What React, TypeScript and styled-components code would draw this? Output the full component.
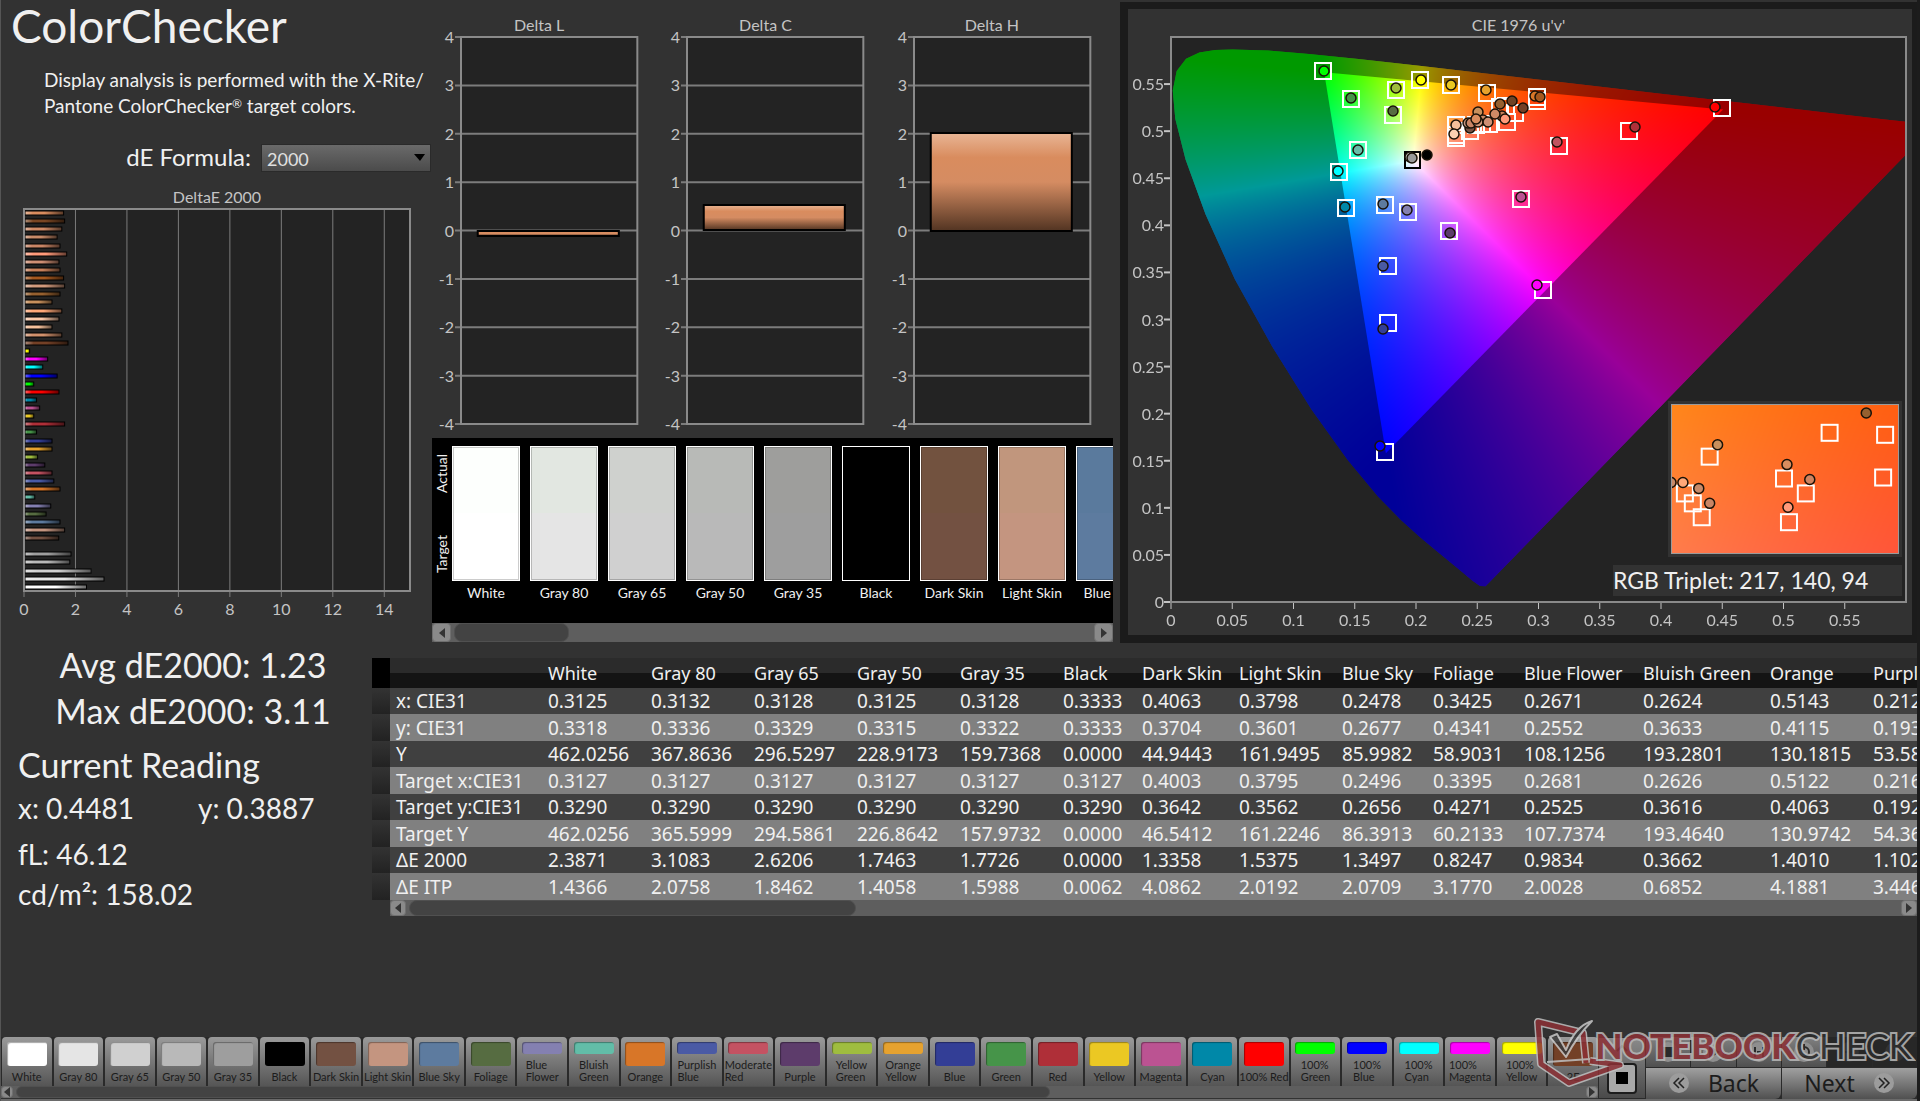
import React, { useEffect, useRef } from "react";
import styled, { createGlobalStyle } from "styled-components";

const Global = createGlobalStyle`
  * { box-sizing: border-box; }
  body { margin: 0; background: #323232; color: #f0f0f0; font-family: Lato, "Open Sans", sans-serif; }
  button, select { font-family: inherit; margin: 0; }
  h1, h2, p { margin: 0; font-weight: 400; }
`;

/* ---------- data ---------- */

type Patch = { name: string; color: string; actual?: string; lines?: string[] };

const patches: Patch[] = [
  { name: "White", color: "#ffffff", actual: "#fdfffd" },
  { name: "Gray 80", color: "#e5e5e5", actual: "#e2e7e1" },
  { name: "Gray 65", color: "#d0d0d0", actual: "#cfd1ce" },
  { name: "Gray 50", color: "#b9b9b9", actual: "#b8bab7" },
  { name: "Gray 35", color: "#9e9e9e", actual: "#9e9e9c" },
  { name: "Black", color: "#000000" },
  { name: "Dark Skin", color: "#735142", actual: "#72523f" },
  { name: "Light Skin", color: "#c49580", actual: "#c1967d" },
  { name: "Blue Sky", color: "#5d7b9f", actual: "#5a7a9d" },
  { name: "Foliage", color: "#566c41" },
  { name: "Blue Flower", color: "#8480b1", lines: ["Blue", "Flower"] },
  { name: "Bluish Green", color: "#62bda8", lines: ["Bluish", "Green"] },
  { name: "Orange", color: "#d87628" },
  { name: "Purplish Blue", color: "#4a5aa5", lines: ["Purplish", "Blue"] },
  { name: "Moderate Red", color: "#c45262", lines: ["Moderate", "Red"] },
  { name: "Purple", color: "#5d3c6b" },
  { name: "Yellow Green", color: "#9fbd3f", lines: ["Yellow", "Green"] },
  { name: "Orange Yellow", color: "#e6a22f", lines: ["Orange", "Yellow"] },
  { name: "Blue", color: "#333e96" },
  { name: "Green", color: "#469449" },
  { name: "Red", color: "#af2f38" },
  { name: "Yellow", color: "#ebc823" },
  { name: "Magenta", color: "#bb5392" },
  { name: "Cyan", color: "#0088a8" },
  { name: "100% Red", color: "#ff0000" },
  { name: "100% Green", color: "#00ff00", lines: ["100%", "Green"] },
  { name: "100% Blue", color: "#0000ff", lines: ["100%", "Blue"] },
  { name: "100% Cyan", color: "#00ffff", lines: ["100%", "Cyan"] },
  { name: "100% Magenta", color: "#ff00ff", lines: ["100%", "Magenta"] },
  { name: "100% Yellow", color: "#ffff00", lines: ["100%", "Yellow"] },
  { name: "2E", color: "#734026" },
];

const skinBars: [string, number][] = [
  ["#d98c5e", 1.5], ["#7a4623", 1.54], ["#cf8a66", 1.43], ["#c88a68", 1.25], ["#c98565", 1.36],
  ["#ff9a7a", 1.62], ["#cf8f74", 1.32], ["#c8805a", 1.36], ["#a5581f", 1.5], ["#d29a7c", 1.54],
  ["#96602f", 1.36], ["#c8905c", 1.05], ["#ffa878", 1.43], ["#fbc8a8", 1.32], ["#f5c09a", 1.05],
  ["#d2916c", 1.43], ["#734026", 1.67],
];
const patchValues = [
  2.39, 3.07, 2.57, 1.74, 1.79, 0, 1.31, 1.54, 1.36, 0.82, 1, 0.38, 1.36, 1.12, 1.05, 0.77, 0.49,
  1.05, 1.05, 0.45, 1.54, 0.34, 0.57, 0.45, 1.32, 0.34, 1.25, 0.69, 0.88, 0.18,
];
const deltaEBars: [string, number][] = [
  ...skinBars,
  ...patchValues.map((v, i) => [patches[i].color, v] as [string, number]).reverse(),
];

const columns: [string, number][] = [
  ["White", 103], ["Gray 80", 103], ["Gray 65", 103], ["Gray 50", 103], ["Gray 35", 103],
  ["Black", 79], ["Dark Skin", 97], ["Light Skin", 103], ["Blue Sky", 91], ["Foliage", 91],
  ["Blue Flower", 119], ["Bluish Green", 127], ["Orange", 103], ["Purplish Blue", 140],
];
const rows: [string, string][] = [
  ["x: CIE31", "0.3125 0.3132 0.3128 0.3125 0.3128 0.3333 0.4063 0.3798 0.2478 0.3425 0.2671 0.2624 0.5143 0.2123"],
  ["y: CIE31", "0.3318 0.3336 0.3329 0.3315 0.3322 0.3333 0.3704 0.3601 0.2677 0.4341 0.2552 0.3633 0.4115 0.1933"],
  ["Y", "462.0256 367.8636 296.5297 228.9173 159.7368 0.0000 44.9443 161.9495 85.9982 58.9031 108.1256 193.2801 130.1815 53.5820"],
  ["Target x:CIE31", "0.3127 0.3127 0.3127 0.3127 0.3127 0.3127 0.4003 0.3795 0.2496 0.3395 0.2681 0.2626 0.5122 0.2164"],
  ["Target y:CIE31", "0.3290 0.3290 0.3290 0.3290 0.3290 0.3290 0.3642 0.3562 0.2656 0.4271 0.2525 0.3616 0.4063 0.1923"],
  ["Target Y", "462.0256 365.5999 294.5861 226.8642 157.9732 0.0000 46.5412 161.2246 86.3913 60.2133 107.7374 193.4640 130.9742 54.3620"],
  ["ΔE 2000", "2.3871 3.1083 2.6206 1.7463 1.7726 0.0000 1.3358 1.5375 1.3497 0.8247 0.9834 0.3662 1.4010 1.1023"],
  ["ΔE ITP", "1.4366 2.0758 1.8462 1.4058 1.5988 0.0062 4.0862 2.0192 2.0709 3.1770 2.0028 0.6852 4.1881 3.4462"],
];

/* spectral locus in CIE 1931 xy */
const locus: number[][] = [
  [0.1741, 0.005], [0.1714, 0.0051], [0.1689, 0.0069], [0.1644, 0.0109], [0.1566, 0.0177],
  [0.151, 0.0227], [0.144, 0.0297], [0.1355, 0.0399], [0.1241, 0.0578], [0.1096, 0.0868],
  [0.0913, 0.1327], [0.0687, 0.2007], [0.0454, 0.295], [0.0235, 0.4127], [0.0082, 0.5384],
  [0.0039, 0.6548], [0.0139, 0.7502], [0.0389, 0.812], [0.0743, 0.8338], [0.1142, 0.8262],
  [0.1547, 0.8059], [0.2296, 0.7543], [0.3016, 0.6923], [0.3731, 0.6245], [0.4441, 0.5547],
  [0.5125, 0.4866], [0.5752, 0.4242], [0.627, 0.3725], [0.6658, 0.334], [0.6915, 0.3083],
  [0.719, 0.2809], [0.7347, 0.2653],
];
const gamut = [[0.4507, 0.5229], [0.125, 0.5625], [0.1754, 0.1579]];

/* marker positions on a 735 x 565 plot */
const targets: number[][] = [
  [152, 34], [249, 43], [280, 48], [225, 53], [180, 62], [222, 78], [316, 56], [366, 60], [366, 64],
  [551, 71], [458, 94], [388, 109], [187, 113], [168, 135], [175, 171], [214, 168], [237, 175],
  [350, 162], [278, 194], [217, 229], [217, 286], [372, 253], [214, 415], [285, 88], [285, 101],
  [285, 98], [299, 94], [305, 88], [311, 87], [318, 87], [329, 70], [336, 85], [344, 76], [335, 69],
];
const readings: [number, number, string][] = [
  [153, 34, "#00ff00"], [250, 43, "#ffff00"], [280, 48, "#e9c820"], [225, 51, "#9fbd3c"],
  [180, 61, "#469449"], [222, 74, "#566c41"], [315, 53, "#e6a22c"], [364, 59, "#d87628"],
  [369, 60, "#a5581f"], [544, 70, "#ff0000"], [464, 90, "#af3039"], [386, 105, "#c15460"],
  [187, 113, "#66bda8"], [167, 134, "#00ffff"], [174, 170, "#0088a8"], [212, 167, "#5d7b9e"],
  [236, 173, "#8480b1"], [350, 160, "#bb5392"], [279, 196, "#5b3b69"], [212, 229, "#4a5aa3"],
  [212, 292, "#333e96"], [366, 248, "#ff00ff"], [209, 409, "#0000ff"], [239, 120, "#e0e0e0"],
  [241, 121, "#999999"], [256, 118, "#000000"], [285, 88, "#f5c09a"], [283, 97, "#fbd0b0"],
  [299, 91, "#735142"], [297, 86, "#c49580"], [300, 86, "#c98565"], [307, 75, "#c8905c"],
  [312, 83, "#c88a68"], [307, 85, "#d29a7c"], [305, 82, "#d98c5e"], [317, 85, "#cf8f74"],
  [331, 79, "#c8805a"], [324, 77, "#cf8a66"], [334, 82, "#ff9a7a"], [329, 67, "#96602f"],
  [341, 64, "#6f4325"], [352, 71, "#734026"],
];
const zoomTargets: number[][] = [
  [159, 28], [215, 30], [38, 52], [113, 74], [135, 89], [213, 73], [13, 89], [21, 99], [30, 113], [118, 118],
];
const zoomReadings: [number, number, string][] = [
  [196, 8, "#96602f"], [46, 40, "#c8905c"], [116, 60, "#d98c5e"], [139, 75, "#cf8360"],
  [117, 103, "#ff9a7a"], [11, 78, "#ffa878"], [27, 84, "#c88a68"], [38, 99, "#c98565"], [-1, 78, "#c88a68"],
];

/* ---------- layout ---------- */

const Page = styled.div`
  min-height: 100vh;
  display: flex;
  flex-direction: column;
  border-left: 1px solid #555;
  border-right: 3px solid #1c1c1c;
  overflow: hidden;
`;
const Top = styled.div`
  display: grid;
  grid-template-columns: 431px 688px minmax(0, 1fr);
`;
const Left = styled.section`
  display: flex;
  flex-direction: column;
`;
const Title = styled.h1`
  font-size: 46px;
  line-height: 52px;
  padding-left: 10px;
`;
const Intro = styled.p`
  margin: 15px 0 0 43px;
  font-size: 19px;
  line-height: 26px;
  white-space: nowrap;
  small { font-size: 12px; line-height: 12px; vertical-align: 5px; }
`;
const Formula = styled.div`
  display: flex;
  justify-content: flex-end;
  align-items: center;
  gap: 10px;
  margin-top: 24px;
  padding-right: 1px;
  font-size: 24px;
  line-height: 28px;
`;
const SelectBox = styled.div`
  position: relative;
  width: 170px;
  height: 28px;
`;
const Select = styled.select`
  width: 100%;
  height: 100%;
  appearance: none;
  border: 1px solid #2a2a2a;
  border-radius: 0;
  padding: 2px 5px 0;
  background: linear-gradient(#6a6a6a, #4b4b4b);
  color: #e0e0e0;
  font-size: 18px;
`;
const Arrow = styled.svg`
  position: absolute;
  right: 6px;
  top: 11px;
  pointer-events: none;
`;
const ChartTitle = styled.h2<{ $pad?: number }>`
  font-size: 16px;
  line-height: 20px;
  text-align: center;
  color: #c4c4c4;
  padding: 0 ${(p) => p.$pad || 0}px 2px 0;
`;
const DeltaEArea = styled.div`
  padding: 16px 22px 0 23px;
`;
const Plot = styled.div<{ $h: number }>`
  position: relative;
  height: ${(p) => p.$h}px;
  background: #232323;
`;
const Layer = styled.svg`
  position: absolute;
  inset: 0;
  width: 100%;
  height: 100%;
  overflow: visible;
  text { fill: #c4c4c4; font-size: 16px; }
`;
const Clipped = styled(Layer)`
  overflow: hidden;
`;
const Middle = styled.section`
  display: flex;
  flex-direction: column;
  padding-right: 7px;
`;
const Deltas = styled.div`
  display: grid;
  grid-template-columns: repeat(3, 1fr);
  gap: 50px;
  padding: 15px 23px 14px 29px;
`;
const Strip = styled.div`
  display: flex;
  height: 185px;
  padding-top: 8px;
  background: #000;
  overflow: hidden;
`;
const SideLabels = styled.div`
  flex: none;
  width: 20px;
  height: 135px;
  display: flex;
  flex-direction: column-reverse;
  justify-content: space-between;
  align-items: center;
  padding: 8px 0;
  font-size: 14px;
  line-height: 18px;
  span { writing-mode: vertical-rl; transform: rotate(180deg); }
`;
const Swatch = styled.figure`
  flex: none;
  width: 68px;
  margin: 0 10px 0 0;
  font-size: 14px;
  line-height: 24px;
  white-space: nowrap;
  figcaption { text-align: center; }
`;
const SwatchColor = styled.div<{ $top: string; $bottom: string }>`
  height: 135px;
  border: 1px solid #fff;
  background: linear-gradient(${(p) => p.$top} 50%, ${(p) => p.$bottom} 50%);
  box-shadow: inset 0 0 0 1px rgba(0, 0, 0, 0.2);
`;

const Bar = styled.div<{ $h: number }>`
  display: grid;
  grid-template-columns: ${(p) => p.$h}px minmax(0, 1fr) ${(p) => p.$h}px;
  gap: 3px;
  height: ${(p) => p.$h}px;
  background: #5e5e5e;
`;
const BarButton = styled.button`
  display: grid;
  place-items: center;
  padding: 0;
  border: 1px solid #707070;
  border-radius: 4px;
  background: #8a8a8a;
`;
const Thumb = styled.div<{ $size: number }>`
  width: ${(p) => p.$size}%;
  height: 100%;
  border: 1px solid #505050;
  border-radius: 8px;
  background: #434343;
`;

const CiePanel = styled.section`
  height: 641px;
  margin-top: 2px;
  border: solid #1b1b1b;
  border-width: 7px 5px 8px 8px;
  padding: 6px 6px 0 43px;
`;
const Field = styled.canvas`
  display: block;
  width: 100%;
  height: 100%;
`;
const Inset = styled.div`
  position: absolute;
  right: 4px;
  top: 364px;
  width: 234px;
  height: 156px;
  padding: 3px;
  background: #323232;
`;
const InsetPlot = styled.div`
  position: relative;
  height: 150px;
  border: 1px solid #9a9a9a;
`;
const Triplet = styled.p`
  position: absolute;
  right: 4px;
  bottom: 6px;
  width: 289px;
  background: #323232;
  font-size: 23px;
  line-height: 31px;
  white-space: nowrap;
`;

const Lower = styled.div`
  display: grid;
  grid-template-columns: 371px minmax(0, 1fr);
  margin-top: 15px;
`;
const Stats = styled.section`
  padding: 0 16px 0 17px;
  font-size: 28px;
  line-height: 40px;
`;
const Scores = styled.div`
  padding-left: 12px;
  margin: -16px 0 8px;
  font-size: 34px;
  line-height: 46px;
  text-align: center;
`;
const Heading = styled.h2`
  font-size: 34px;
  line-height: 46px;
`;
const Pair = styled.div`
  display: grid;
  grid-template-columns: 180px 1fr;
  margin-bottom: 6px;
  white-space: nowrap;
`;
const TableBox = styled.div`
  overflow: hidden;
`;
const Table = styled.table`
  width: max-content;
  table-layout: fixed;
  border-collapse: collapse;
  font-family: "Noto Sans", sans-serif;
  font-size: 19px;
  line-height: 24px;
  white-space: nowrap;
  th, td { font-weight: 400; text-align: left; padding: 0 0 0 6px; }
  thead th {
    height: 30px;
    font-size: 18px;
    background: linear-gradient(#2b2b2b 50%, #141414 50%);
  }
  thead th:first-child { background: #000; }
  tbody tr { height: 26px; background: #404040; }
  tbody tr:nth-child(even) { height: 27px; background: #808080; }
  tbody td:first-child { background: linear-gradient(#333, #222); }
`;
const TableScroll = styled.div`
  padding-left: 18px;
`;

const Footer = styled.footer`
  display: grid;
  grid-template-columns: minmax(0, 1fr) 48px 271px;
  height: 64px;
  margin-top: auto;
  border-bottom: 2px solid #6a6a6a;
  position: relative;
`;
const Tabs = styled.nav`
  display: grid;
  grid-template-columns: repeat(31, minmax(0, 1fr));
  gap: 2px;
  height: 49px;
  padding-left: 1px;
  background: #2a2a2a;
`;
const Tab = styled.button`
  display: flex;
  flex-direction: column;
  align-items: center;
  justify-content: space-between;
  padding: 5px 0 3px;
  border: 0;
  border-radius: 4px 4px 0 0;
  background: linear-gradient(#9a9a9a, #555);
  color: #1c1c1c;
  font-size: 11px;
  line-height: 12px;
  text-align: left;
  white-space: nowrap;
  overflow: hidden;
`;
const Chip = styled.span<{ $color: string; $short: boolean }>`
  width: 40px;
  height: ${(p) => (p.$short ? 12 : 24)}px;
  border-radius: 3px;
  background: ${(p) => p.$color};
  box-shadow: inset 1px 1px 1px rgba(0, 0, 0, 0.35);
`;
const Stop = styled.div`
  display: grid;
  grid-template-rows: 20px 1fr;
  place-items: center;
  background: linear-gradient(#8a8a8a, #4a4a4a);
  border: 1px solid #2a2a2a;
`;
const StopButton = styled.button`
  width: 30px;
  height: 31px;
  padding: 7px;
  border: 2px solid #1c1c1c;
  border-radius: 4px;
  background: #a8a8a8;
  span { display: block; height: 12px; background: #000; }
`;
const Controls = styled.div`
  display: grid;
  grid-template-columns: repeat(6, 1fr);
  grid-template-rows: 30px 1fr;
  gap: 1px;
  background: #2a2a2a;
`;
const Control = styled.button<{ $off?: boolean }>`
  display: grid;
  place-items: center;
  padding: 0;
  border: 0;
  background: ${(p) => (p.$off ? "#272727" : "linear-gradient(#808080, #505050)")};
`;
const Nav = styled.button`
  grid-column: span 3;
  display: flex;
  align-items: center;
  justify-content: center;
  gap: 18px;
  padding: 0 0 2px;
  border: 0;
  border-radius: 0 0 6px 0;
  background: linear-gradient(#a0a0a0, #505050);
  color: #1c1c1c;
  font-family: "Noto Sans", sans-serif;
  font-size: 23px;
  line-height: 28px;
`;
const Watermark = styled.div`
  position: absolute;
  right: 5px;
  bottom: 10px;
  display: flex;
  align-items: flex-start;
  pointer-events: none;
  opacity: 0.85;
`;
const Emblem = styled.svg`
  margin-right: -30px;
`;
const Brand = styled.div`
  padding-top: 6px;
  font-size: 35px;
  line-height: 44px;
  font-weight: 900;
  color: #8c3035;
  paint-order: stroke fill;
  -webkit-text-stroke: 4px #b8b8b8;
  span { font-weight: 400; color: #2c2c2c; }
`;

/* ---------- parts ---------- */

function Scrollbar({ height, size }: { height: number; size: number }) {
  return (
    <Bar $h={height}>
      <BarButton aria-label="Scroll left">
        <svg width="6" height="10"><path d="M6 0 0 5l6 5z" fill="#333" /></svg>
      </BarButton>
      <Thumb $size={size} />
      <BarButton aria-label="Scroll right">
        <svg width="6" height="10"><path d="m0 0 6 5-6 5z" fill="#333" /></svg>
      </BarButton>
    </Bar>
  );
}

function DeltaEChart() {
  const pitch = 382 / deltaEBars.length;
  return (
    <Plot $h={382}>
      <Layer>
        <defs>
          <linearGradient id="shade">
            <stop offset="0" stopColor="#fff" stopOpacity=".4" />
            <stop offset=".2" stopColor="#fff" stopOpacity="0" />
            <stop offset=".5" stopColor="#000" stopOpacity="0" />
            <stop offset="1" stopColor="#000" stopOpacity=".6" />
          </linearGradient>
        </defs>
        {[0, 2, 4, 6, 8, 10, 12, 14].map((v) => {
          const x = `${(v / 15) * 100}%`;
          return (
            <g key={v}>
              <line x1={x} x2={x} y1="0" y2="388" stroke="#7c7c7c" strokeWidth="1" />
              <text x={x} y="406" textAnchor="middle">{v}</text>
            </g>
          );
        })}
        {deltaEBars.map(([color, v], i) => {
          if (!v) return null;
          const box = { x: 1, y: Math.round(i * pitch) + 2, width: `${(v / 15) * 100}%`, height: 4 };
          return (
            <g key={i}>
              <rect {...box} fill={color} />
              <rect {...box} fill="url(#shade)" stroke="#000" strokeWidth="1" />
            </g>
          );
        })}
        <rect width="100%" height="100%" fill="none" stroke="#8a8a8a" strokeWidth="2" />
      </Layer>
    </Plot>
  );
}

function DeltaChart({ title, value }: { title: string; value: number }) {
  const h = 387;
  const unit = h / 8;
  const box = {
    x: "9.5%",
    width: "80%",
    y: Math.round(h / 2 - Math.max(value, 0) * unit),
    height: Math.round(Math.abs(value) * unit),
  };
  return (
    <div>
      <ChartTitle $pad={20}>{title}</ChartTitle>
      <Plot $h={h}>
        <Layer>
          <defs>
            <linearGradient id="barShade" x2="0" y2="1">
              <stop offset="0" stopColor="#e8b595" />
              <stop offset=".25" stopColor="#d98c5e" />
              <stop offset=".5" stopColor="#d58c62" />
              <stop offset="1" stopColor="#523422" />
            </linearGradient>
          </defs>
          {[4, 3, 2, 1, 0, -1, -2, -3, -4].map((v) => {
            const y = (4 - v) * unit;
            return (
              <g key={v}>
                <line x1="-6" x2="100%" y1={y} y2={y} stroke="#7c7c7c" strokeWidth="2" />
                <text x="-7" y={y + 6} textAnchor="end">{v}</text>
              </g>
            );
          })}
          <rect width="100%" height="100%" fill="none" stroke="#8a8a8a" strokeWidth="2" />
          <rect {...box} fill="url(#barShade)" stroke="#000" strokeWidth="2" />
        </Layer>
      </Plot>
    </div>
  );
}

function ChromaField({ range, masked }: { range: number[]; masked?: boolean }) {
  const ref = useRef<HTMLCanvasElement>(null);
  const w = 735;
  const h = 565;
  useEffect(() => {
    const ctx = ref.current!.getContext("2d")!;
    const [u0, u1, v0, v1] = range;
    const field = document.createElement("canvas");
    field.width = w;
    field.height = h;
    const fctx = field.getContext("2d")!;
    const img = fctx.createImageData(w, h);
    for (let j = 0; j < h; j++) {
      const v = Math.max(v1 - ((j + 0.5) / h) * (v1 - v0), 0.001);
      for (let i = 0; i < w; i++) {
        const u = u0 + ((i + 0.5) / w) * (u1 - u0);
        const X = (9 * u) / (4 * v);
        const Z = (12 - 3 * u - 20 * v) / (4 * v);
        const rgb = [
          3.2406 * X - 1.5372 - 0.4986 * Z,
          -0.9689 * X + 1.8758 + 0.0415 * Z,
          0.0557 * X - 0.204 + 1.057 * Z,
        ].map((c) => Math.max(c, 0));
        const top = Math.max(...rgb);
        const k = (j * w + i) * 4;
        rgb.forEach((c, n) => { img.data[k + n] = (255 * c) / top; });
        img.data[k + 3] = 255;
      }
    }
    fctx.putImageData(img, 0, 0);
    if (!masked) {
      ctx.drawImage(field, 0, 0);
      return;
    }
    const clip = (points: number[][]) => {
      ctx.beginPath();
      points.forEach(([u, v]) => ctx.lineTo(((u - u0) / (u1 - u0)) * w, ((v1 - v) / (v1 - v0)) * h));
      ctx.closePath();
      ctx.clip();
    };
    ctx.clearRect(0, 0, w, h);
    ctx.save();
    clip(locus.map(([x, y]) => {
      const d = -2 * x + 12 * y + 3;
      return [(4 * x) / d, (9 * y) / d];
    }));
    ctx.drawImage(field, 0, 0);
    ctx.fillStyle = "rgba(0,0,0,.4)";
    ctx.fillRect(0, 0, w, h);
    clip(gamut);
    ctx.drawImage(field, 0, 0);
    ctx.restore();
  }, []);
  return <Field ref={ref} width={w} height={h} />;
}

function Markers({ squares, circles, w, h }: { squares: number[][]; circles: [number, number, string][]; w: number; h: number }) {
  return (
    <Clipped>
      {squares.map(([x, y], i) => (
        <svg key={i} x={`${(x / w) * 100}%`} y={`${(y / h) * 100}%`} overflow="visible">
          <rect x="-8" y="-8" width="16" height="16" fill="none" stroke="#fff" strokeWidth="2" />
        </svg>
      ))}
      {w === 735 && (
        <svg x={`${(241 / w) * 100}%`} y={`${(123 / h) * 100}%`} overflow="visible">
          <rect x="-7" y="-8" width="15" height="16" fill="none" stroke="#000" strokeWidth="2" />
        </svg>
      )}
      {circles.map(([x, y, color], i) => (
        <circle key={i} cx={`${(x / w) * 100}%`} cy={`${(y / h) * 100}%`} r="5" fill={color} stroke="#1a1208" strokeWidth="1.5" />
      ))}
    </Clipped>
  );
}

function CieChart() {
  const ticks = Array.from({ length: 12 }, (_, i) => i * 5);
  return (
    <CiePanel>
      <ChartTitle $pad={40}>CIE 1976 u'v'</ChartTitle>
      <Plot $h={565}>
        <ChromaField range={[0, 0.6, 0, 0.6]} masked />
        <Layer>
          {ticks.map((t) => {
            const at = (t / 60) * 100;
            return (
              <g key={t} stroke="#c4c4c4" strokeWidth="0">
                <line x1={`${at}%`} x2={`${at}%`} y1="565" y2="572" strokeWidth="1" />
                <text x={`${at}%`} y="589" textAnchor="middle">{t / 100}</text>
                <line x1="-7" x2="0" y1={`${100 - at}%`} y2={`${100 - at}%`} strokeWidth="2" />
                <text x="-7" y={565 - (t / 60) * 565 + 6} textAnchor="end">{t / 100}</text>
              </g>
            );
          })}
          <rect width="100%" height="100%" fill="none" stroke="#8a8a8a" strokeWidth="2" />
        </Layer>
        <Markers squares={targets} circles={readings} w={735} h={565} />
        <Inset>
          <InsetPlot>
            <ChromaField range={[0.245, 0.2722, 0.501, 0.531]} />
            <Markers squares={zoomTargets} circles={zoomReadings} w={228} h={149} />
          </InsetPlot>
        </Inset>
        <Triplet>RGB Triplet: 217, 140, 94</Triplet>
      </Plot>
    </CiePanel>
  );
}

const glyphs = ["M8 8h8v8H8z", "M9 7l8 5-8 5z", "M8 7v10M16 7v10M10 12h4", "M7 12a5 5 0 1 0 5-5M12 4v6", "M8 12h8", "M8 12h8"];

function ControlIcon({ d, off }: { d: string; off: boolean }) {
  return (
    <svg width="24" height="24" viewBox="0 0 24 24">
      <circle cx="12" cy="12" r="10" fill={off ? "#333" : "#8e8e8e"} />
      <path d={d} fill={d.endsWith("z") ? "#2a2a2a" : "none"} stroke="#2a2a2a" strokeWidth="2" />
    </svg>
  );
}

function Chevrons({ flip }: { flip?: boolean }) {
  return (
    <svg width="22" height="22" viewBox="0 0 22 22">
      <circle cx="11" cy="11" r="10" fill="#9c9c9c" />
      <path d={flip ? "M6 6l5 5-5 5M11 6l5 5-5 5" : "M11 6l-5 5 5 5M16 6l-5 5 5 5"} fill="none" stroke="#222" strokeWidth="1.5" />
    </svg>
  );
}

export default function App() {
  return (
    <>
      <Global />
      <Page>
        <Top>
          <Left>
            <Title>ColorChecker</Title>
            <Intro>
              Display analysis is performed with the X-Rite/<br />
              Pantone ColorChecker<small>®</small> target colors.
            </Intro>
            <Formula>
              <label htmlFor="formula">dE Formula:</label>
              <SelectBox>
                <Select id="formula" defaultValue="2000">
                  <option>2000</option>
                </Select>
                <Arrow width="11" height="7"><path d="M0 0h11L6 7z" fill="#000" /></Arrow>
              </SelectBox>
            </Formula>
            <DeltaEArea>
              <ChartTitle>DeltaE 2000</ChartTitle>
              <DeltaEChart />
            </DeltaEArea>
          </Left>
          <Middle>
            <Deltas>
              <DeltaChart title="Delta L" value={-0.1} />
              <DeltaChart title="Delta C" value={0.52} />
              <DeltaChart title="Delta H" value={2.02} />
            </Deltas>
            <Strip>
              <SideLabels><span>Target</span><span>Actual</span></SideLabels>
              {patches.slice(0, 9).map((p) => (
                <Swatch key={p.name}>
                  <SwatchColor $top={p.actual || p.color} $bottom={p.color} />
                  <figcaption>{p.name}</figcaption>
                </Swatch>
              ))}
            </Strip>
            <Scrollbar height={19} size={18} />
          </Middle>
          <CieChart />
        </Top>
        <Lower>
          <Stats>
            <Scores>
              <p>Avg dE2000: 1.23</p>
              <p>Max dE2000: 3.11</p>
            </Scores>
            <Heading>Current Reading</Heading>
            <Pair><span>x: 0.4481</span><span>y: 0.3887</span></Pair>
            <p>fL: 46.12</p>
            <p>cd/m²: 158.02</p>
          </Stats>
          <TableBox>
            <Table>
              <colgroup>
                <col style={{ width: 18 }} />
                <col style={{ width: 152 }} />
                {columns.map(([name, width]) => <col key={name} style={{ width }} />)}
              </colgroup>
              <thead>
                <tr>
                  <th /><th />
                  {columns.map(([name]) => <th key={name} scope="col">{name}</th>)}
                </tr>
              </thead>
              <tbody>
                {rows.map(([label, values]) => (
                  <tr key={label}>
                    <td />
                    <th scope="row">{label}</th>
                    {values.split(" ").map((v, i) => <td key={i}>{v}</td>)}
                  </tr>
                ))}
              </tbody>
            </Table>
            <TableScroll><Scrollbar height={16} size={30} /></TableScroll>
          </TableBox>
        </Lower>
        <Footer>
          <div>
            <Tabs>
              {patches.map((p) => (
                <Tab key={p.name}>
                  <Chip $color={p.color} $short={!!p.lines} />
                  <span>{p.lines ? <>{p.lines[0]}<br />{p.lines[1]}</> : p.name}</span>
                </Tab>
              ))}
            </Tabs>
            <Scrollbar height={12} size={66} />
          </div>
          <Stop>
            <svg width="12" height="8"><path d="M1 7l5-5 5 5" fill="none" stroke="#2a2a2a" strokeWidth="2" /></svg>
            <StopButton aria-label="Pattern window"><span /></StopButton>
          </Stop>
          <Controls>
            {glyphs.map((d, i) => (
              <Control key={i} $off={i > 3} aria-label={`Control ${i + 1}`}><ControlIcon d={d} off={i > 3} /></Control>
            ))}
            <Nav><Chevrons />Back</Nav>
            <Nav>Next<Chevrons flip /></Nav>
          </Controls>
          <Watermark>
            <Emblem width="92" height="72" viewBox="0 0 92 72" fill="none" strokeLinejoin="round">
              <path d="M53 46 50 16 5 5l3 42 28 19 51-18-30-4" stroke="#c0c0c0" strokeWidth="8" />
              <path d="M53 46 50 16 5 5l3 42 28 19 51-18-30-4" stroke="#8c3035" strokeWidth="5" />
              <path d="M14 45l43-3" stroke="#c0c0c0" strokeWidth="2" />
              <path d="M17 20l7-3 9 16C38 20 46 8 59 4 48 15 40 27 33 40z" fill="#3a3a3a" stroke="#c8c8c8" strokeWidth="2" />
            </Emblem>
            <Brand>NOTEBOOK<span>CHECK</span></Brand>
          </Watermark>
        </Footer>
      </Page>
    </>
  );
}
